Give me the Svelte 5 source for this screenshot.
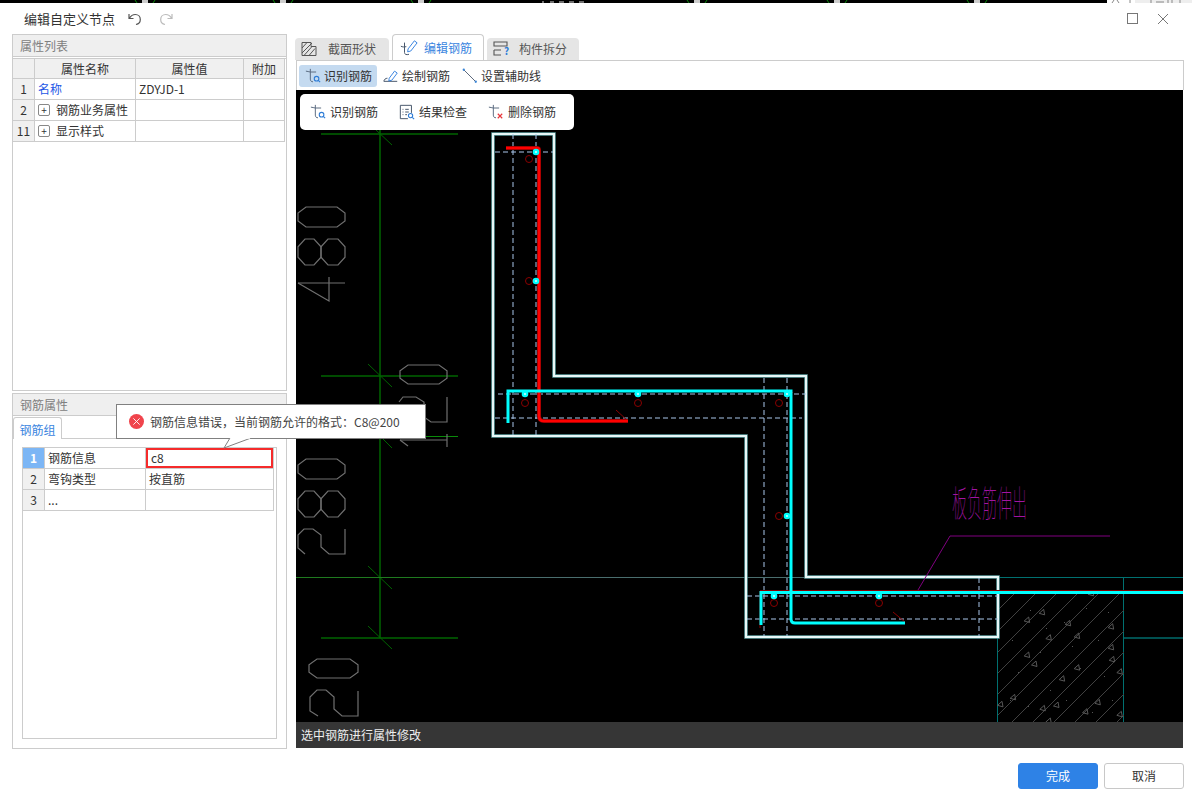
<script>
  const octo = (x1, y1, x2, y2, c = 8) =>
    `${x1 + c},${y1} ${x2 - c},${y1} ${x2},${y1 + (y2 - y1) * 0.3} ${x2},${y2 - (y2 - y1) * 0.3} ${x2 - c},${y2} ${x1 + c},${y2} ${x1},${y2 - (y2 - y1) * 0.3} ${x1},${y1 + (y2 - y1) * 0.3}`;
  const zeros = [
    [298, 207, 345, 227],
    [400, 365, 447, 384],
    [298, 459, 345, 479],
    [309, 659, 358, 678]
  ];
  const rounds = [
    [298, 239, 321, 265],
    [321, 239, 345, 265],
    [298, 491, 321, 517],
    [321, 491, 345, 517]
  ];
  const grayLines = [
    '298,283 345,283',
    '298,283 329,301 329,277',
    '399,402 403,397 416,397 424,402 424,417 431,422 447,422 447,397',
    '447,434 447,447',
    '400,440 447,440',
    '400,440 408,446',
    '305,554 298,548 298,535 304,529 313,529 321,535 321,547 329,554 345,554 345,529',
    '318,716 310,711 310,697 317,690 326,690 334,697 334,709 342,716 358,716 358,691'
  ];
  const ticks = [
    [376, 130, 392, 145],
    [368, 364, 392, 387],
    [368, 424, 392, 448],
    [368, 566, 392, 589],
    [368, 626, 392, 649]
  ];
  const hatch = Array.from({ length: 13 }, (_, i) => 1016 + i * 21);
  const rocks = [
    [302, 100], [155, 157], [110, 180], [233, 190], [362, 200], [175, 233], [260, 228],
    [362, 262], [110, 285], [132, 312], [365, 298], [260, 323], [388, 335], [215, 356],
    [68, 412], [30, 433], [198, 435], [157, 445], [322, 427], [285, 455], [388, 463], [175, 483]
  ].map(([x, y]) => [990 + x / 3, 560 + y / 3]);
  const specks = [
    [1030, 610], [1046, 628], [1086, 608], [1108, 612], [1012, 640], [1040, 652], [1064, 622],
    [1098, 640], [1018, 672], [1050, 690], [1080, 668], [1104, 676], [1028, 706], [1066, 700],
    [1092, 712], [1010, 700], [1072, 646], [1112, 700]
  ];
  const reds = [[529, 159], [529, 281], [525, 403], [638, 403], [779, 403], [779, 516], [774, 603], [879, 603]];
  const nodes = [[536, 152], [536, 281], [525, 394], [638, 394], [787, 394], [787, 516], [774, 596], [879, 596]];
  const outline = '493,134 554,134 554,376 806,376 806,577 998,577 998,637 746,637 746,436 493,436';
  const dashes = [
    'M513 134V436', 'M536 134V436', 'M495 152H553', 'M498 394H806', 'M495 418H802',
    'M764 378V636', 'M787 378V636', 'M979 578V636', 'M747 596H998', 'M747 619H998'
  ];
  const arcs = [135, 273, 411, 687, 827, 967];

  const props1 = [
    { n: '1', name: '名称', value: 'ZDYJD-1', link: true },
    { n: '2', name: '钢筋业务属性', value: '', plus: true },
    { n: '11', name: '显示样式', value: '', plus: true }
  ];
  const props2 = [
    { n: '1', name: '钢筋信息', value: 'c8', on: true },
    { n: '2', name: '弯钩类型', value: '按直筋' },
    { n: '3', name: '...', value: '' }
  ];
</script>

{#snippet rebarIcon(color, mark)}
  <svg class="ic" viewBox="0 0 18 18" fill="none">
    <path d="M1 3.500c2 0 3 1 5 1M6 1v11.500c0 2 1 3 3 3M6 4.500h6.500" stroke="#5a6a80" stroke-width="1.100"/>
    {#if mark === 'x'}
      <path d="M11 11l5 5M16 11l-5 5" stroke="#e8373c" stroke-width="1.300"/>
    {:else}
      <circle cx="13" cy="12" r="2.600" stroke={color} stroke-width="1.200"/>
      <path d="M15 14l2 2" stroke={color} stroke-width="1.200"/>
    {/if}
  </svg>
{/snippet}

<div class="page">
  <svg class="topstrip" viewBox="0 0 1192 3" fill="none">
    <rect width="1107" height="3" fill="#000"/>
    {#each arcs as x}
      <path d="M{x} 0l2 3M{x + 20} 0l-2 3" stroke="#0a8a0a"/>
      <rect x={x + 7} y="0" width="6" height="3" fill="#ccc"/>
    {/each}
    <path d="M543 1v2M550 2h4M559 2h5M569 2h5M579 2h5" stroke="#ddd"/>
    <path d="M1112 3l2-3M1117 0l2 3M1130 0v3" stroke="#888"/>
    <rect x="1135" y="0" width="57" height="3" fill="#eee"/>
    <path d="M1151 0v3M1156 2h8M1168 0v3M1172 0v3M1180 0v3" stroke="#888"/>
  </svg>

  <header class="head">
    <span class="title">编辑自定义节点</span>
    <svg class="hi" viewBox="0 0 16 16" fill="none"><path d="M2 3v4.500h4.500M2.400 7.200C4 4.600 6 3.500 8.300 3.500c3 0 5 2.300 5 5s-1.800 4.500-4.300 5" stroke="#555" stroke-width="1.200"/></svg>
    <svg class="hi" viewBox="0 0 16 16" fill="none"><path d="M14 3v4.500H9.500M13.600 7.200C12 4.600 10 3.500 7.700 3.500c-3 0-5 2.300-5 5s1.800 4.500 4.300 5" stroke="#bbb" stroke-width="1.200"/></svg>
    <span class="spacer"></span>
    <span class="winmax"></span>
    <svg class="winclose" viewBox="0 0 12 12" fill="none"><path d="M1 1l10 10M11 1L1 11" stroke="#777" stroke-width="1"/></svg>
  </header>

  <main class="body">
    <aside class="side">
      <section class="panel top">
        <h2>属性列表</h2>
        <div class="grid g1">
          <div class="c hd"></div><div class="c hd">属性名称</div><div class="c hd">属性值</div><div class="c hd">附加</div>
          {#each props1 as r}
            <div class="c hd">{r.n}</div>
            <div class="c left" class:link={r.link}>
              {#if r.plus}<span class="plus">+</span>{/if}{r.name}
            </div>
            <div class="c left">{r.value}</div>
            <div class="c"></div>
          {/each}
        </div>
      </section>

      <section class="panel bottom">
        <h2>钢筋属性</h2>
        <div class="subtabs"><span class="subtab">钢筋组</span></div>
        <div class="gridbox">
          <div class="grid g2">
            {#each props2 as r}
              <div class="c hd" class:sel={r.on}>{r.n}</div>
              <div class="c left">{r.name}</div>
              <div class="c left" class:err={r.on}>{r.value}</div>
            {/each}
          </div>
        </div>
      </section>

      <div class="tip">
        <span class="erricon"><svg viewBox="0 0 10 10" fill="none"><path d="M1.500 1.500l7 7M8.500 1.500l-7 7" stroke="#fff" stroke-width="1"/></svg></span>
        钢筋信息错误，当前钢筋允许的格式：C8@200
        <svg class="tail" viewBox="0 0 30 12" fill="none"><path d="M7 0L1 10L28 0" fill="#fff"/><path d="M7 0L1 10L28 0" stroke="#808080"/><path d="M7.500 0H27" stroke="#fff" stroke-width="1.500"/></svg>
      </div>
    </aside>

    <section class="right">
      <nav class="tabs">
        <button class="tab t1">
          <svg class="tabic" viewBox="0 0 16 16" fill="none"><path d="M1 1.500h9v4h5v9H1z" stroke="#555"/><path d="M1 7l5-5.500M1 12L11 2M3 14.500l8-9M8 14.500l6-7" stroke="#555"/></svg>
          截面形状
        </button>
        <button class="tab t2 active">
          <svg class="tabic big" viewBox="0 0 20 20" fill="none"><path d="M1 8c2 1 3 1 6 .500M5 4v11c0 2 2 3 5 2" stroke="#47566b" stroke-width="1.100"/><path d="M9 11l7-9 3 2.300-7 9-3.500 1z" stroke="#3a85e0" stroke-width="1.100"/></svg>
          编辑钢筋
        </button>
        <button class="tab t3">
          <svg class="tabic big" viewBox="0 0 18 18" fill="none"><path d="M1 2h13v4H1zM1 10h7M1 10v5h7" stroke="#555" stroke-width="1.100"/></svg><span class="q">?</span>
          构件拆分
        </button>
      </nav>

      <div class="toolbar">
        <span class="tool on">{@render rebarIcon('#2e7cd6')}识别钢筋</span>
        <span class="tool">
          <svg class="ic" viewBox="0 0 18 18" fill="none"><path d="M1 15c0-2 2-3.500 4-3.500M1 15h15" stroke="#47566b" stroke-width="1.100"/><path d="M7 11.500l6-8 3 2.200-6 8-3.500.8z" stroke="#3a85e0" stroke-width="1.100"/></svg>绘制钢筋
        </span>
        <span class="tool third">
          <svg class="ic" viewBox="0 0 18 18" fill="none"><path d="M2 2l13.500 13.500" stroke="#47566b"/><circle cx="2" cy="2" r="1.300" fill="#3a85d6"/><circle cx="15.500" cy="15.500" r="1.300" fill="#3a85d6"/></svg>设置辅助线
        </span>
      </div>

      <div class="canvas">
        <svg class="cad" viewBox="296 90 887 632" fill="none">
          <g stroke="#006400">
            <path d="M380 130V638" stroke-width="1.500"/>
            <path d="M321 134H458M321 376H458M321 638H458" stroke-width="1.500"/>
            {#each ticks as t}<line x1={t[0]} y1={t[1]} x2={t[2]} y2={t[3]}/>{/each}
          </g>
          <path d="M425 436.500H458" stroke="#0a8a0a"/>
          <path d="M296 577.500H470" stroke="#1f7a1f"/>
          <path d="M470 577.500H1183" stroke="#4a6e6e"/>

          <g stroke="#707070" stroke-width="1.200">
            {#each zeros as z}<polygon points={octo(z[0], z[1], z[2], z[3])}/>{/each}
            {#each rounds as z}<polygon points={octo(z[0], z[1], z[2], z[3], 7)}/>{/each}
            {#each grayLines as l}<polyline points={l}/>{/each}
          </g>

          <g stroke="#007070">
            <path d="M997.500 577V722M1123.500 577V722M998 577.500H1183"/>
            <path d="M1124 638H1183" stroke="#005050" stroke-width="2"/>
          </g>
          <svg x="998" y="592" width="126" height="130" viewBox="998 592 126 130">
            <g stroke="#414141">
              {#each hatch as x}<line x1={x} y1="592" x2={x - 140} y2="732"/>{/each}
            </g>
          </svg>
          <g stroke="#585858">
            {#each rocks as r}
              <polygon points="{r[0] - 2.500},{r[1] + 1} {r[0] + 2},{r[1] - 3} {r[0] + 3},{r[1] + 2.500}"/>
            {/each}
          </g>
          {#each specks as s}<rect x={s[0]} y={s[1]} width="1" height="1" fill="#555"/>{/each}

          <polygon points={outline} stroke="#5f9ea0" stroke-width="3.500"/>
          <polygon points={outline} stroke="#e8f8f8" stroke-width="2"/>

          <g stroke="#a9c6ea" stroke-dasharray="5 3">
            {#each dashes as d}<path d={d}/>{/each}
          </g>

          <path d="M918 590L950 536H1110" stroke="#800080"/>
          <text class="cadtext" transform="translate(952 517) scale(1 2.450)">板负筋伸出</text>

          <g stroke="#8a0000">
            <path d="M616 410L628 421M893 612L905 622M760 590.500H1183M760 591V628M789 389.500L793 393"/>
            {#each reds as c}<circle cx={c[0]} cy={c[1]} r="3.500"/>{/each}
          </g>

          <path d="M506 148H537Q539 148 539 150V416Q539 421 544 421H628" stroke="#8a0000" stroke-width="4"/>
          <path d="M506 148H537Q539 148 539 150V416Q539 421 544 421H628" stroke="#f00" stroke-width="2.600"/>
          <path d="M508 423V391H791V619Q791 623 795 623H905" stroke="#0ff" stroke-width="3"/>
          <path d="M761 625V592.500H1183" stroke="#0ff" stroke-width="3"/>
          {#each nodes as n}<circle cx={n[0]} cy={n[1]} r="3.300" fill="#0ff"/><circle cx={n[0]} cy={n[1]} r="1" fill="#d8ffff"/>{/each}
        </svg>

        <div class="float">
          <span class="ftool">{@render rebarIcon('#2e7cd6')}识别钢筋</span>
          <span class="ftool">
            <svg class="ic" viewBox="0 0 18 18" fill="none"><path d="M14 10V1.500H1.500v15H10M4 6h1M7 6h4M4 9h1M7 9h4M4 12h1M7 12h2" stroke="#47566b" stroke-width="1.100"/><circle cx="13" cy="13" r="2.400" stroke="#2e7cd6" stroke-width="1.200"/><path d="M15 15l2 2" stroke="#2e7cd6" stroke-width="1.200"/></svg>结果检查
          </span>
          <span class="ftool">{@render rebarIcon('#e8373c', 'x')}删除钢筋</span>
        </div>
      </div>

      <div class="status">选中钢筋进行属性修改</div>
    </section>
  </main>

  <footer class="foot">
    <button class="btn primary">完成</button>
    <button class="btn">取消</button>
  </footer>
</div>

<style>
  :global(body) { margin: 0; background: #fff; }
  .page {
    width: 1192px; height: 791px; overflow: hidden; position: relative;
    font: 12px/1 "Noto Sans CJK SC", "Liberation Sans", sans-serif; color: #333;
    background: #fff; display: flex; flex-direction: column;
  }
  .topstrip { width: 1192px; height: 3px; flex: none; display: block; }

  .head { height: 31px; flex: none; display: flex; align-items: center; padding: 0 23px 0 24px; box-sizing: border-box; }
  .title { font-size: 13px; color: #333; margin-right: 12px; }
  .hi { width: 16px; height: 16px; margin-right: 15px; }
  .spacer { flex: 1; }
  .winmax { width: 9px; height: 9px; border: 1px solid #777; margin-right: 19px; }
  .winclose { width: 12px; height: 12px; }

  .body { height: 715px; flex: none; display: flex; padding-left: 12px; gap: 9px; }
  .side { width: 275px; flex: none; display: flex; flex-direction: column; gap: 2px; position: relative; z-index: 2; }
  .panel { border: 1px solid #ccc; box-sizing: border-box; background: #fff; }
  .panel h2 {
    margin: 0; height: 21px; background: #efefef; border-bottom: 1px solid #ccc;
    font-size: 12px; font-weight: 400; color: #808080; line-height: 21px; padding-left: 7px;
  }
  .top { height: 357px; }
  .bottom { flex: 1; position: relative; }

  .grid { display: grid; background: #fff; }
  .g1 { grid-template-columns: 22px 101px 108px 41px; grid-template-rows: 20px; grid-auto-rows: 21px; border-top: 1px solid #ccc; margin-top: 1px; }
  .g2 { grid-template-columns: 22px 101px 128px; grid-auto-rows: 21px; }
  .c {
    border-right: 1px solid #ccc; border-bottom: 1px solid #ccc; box-sizing: border-box;
    display: flex; align-items: center; justify-content: center; font-size: 12px; color: #333; min-width: 0; white-space: nowrap;
  }
  .hd { background: #f0f0f0; }
  .left { justify-content: flex-start; padding-left: 3px; }
  .link { color: #2457e6; }
  .plus {
    width: 10px; height: 10px; border: 1px solid #888; border-radius: 2px; margin: 0 6px 0 0;
    display: inline-flex; align-items: center; justify-content: center; font-size: 10px; flex: none; box-sizing: content-box;
  }
  .subtabs { height: 21px; margin-top: 1px; border-bottom: 1px solid #ccc; display: flex; padding-left: 0; }
  .subtab {
    width: 49px; height: 22px; box-sizing: border-box; border: 1px solid #ccc; border-bottom: 0; border-radius: 3px 3px 0 0;
    background: #fff; color: #3a85e0; display: flex; align-items: center; justify-content: center; padding-top: 2px;
  }
  .gridbox { position: absolute; left: 9px; top: 53px; width: 255px; bottom: 9px; border: 1px solid #ccc; box-sizing: border-box; }
  .gridbox .g2 { border-top: 1px solid #ccc; margin: -1px 0 0 0; }
  .sel { background: #7cb6f5; color: #fff; font-weight: 700; }
  .err { box-shadow: inset 0 0 0 2px #f52b2b; padding-left: 5px; }

  .tip {
    position: absolute; left: 104px; top: 370px; width: 310px; height: 35px; box-sizing: border-box;
    border: 1px solid #808080; background: #fff; display: flex; align-items: center; padding-left: 12px; color: #444; white-space: nowrap;
  }
  .erricon {
    width: 15px; height: 15px; border-radius: 50%; background: #f0444c; display: inline-flex; align-items: center; justify-content: center; margin-right: 6px; flex: none;
  }
  .erricon svg { width: 9px; height: 9px; }
  .tail { position: absolute; left: 106px; top: 33px; width: 30px; height: 12px; }

  .right { width: 888px; flex: none; display: flex; flex-direction: column; }
  .tabs { height: 26px; flex: none; display: flex; }
  .tab {
    height: 22px; margin-top: 4px; border: 0; background: #e5e5e5; border-radius: 4px 4px 0 0; padding: 0 0 0 6px;
    display: flex; align-items: center; font: inherit; color: #555; white-space: nowrap; position: relative;
  }
  .t1 { width: 94px; margin-left: -1px; }
  .t2 { width: 92px; margin-left: 3px; padding-left: 7px; }
  .t3 { width: 92px; margin-left: 3px; }
  .active {
    height: 26px; margin-top: 0; background: #fff; border: 1px solid #ccc; border-bottom: 0; color: #3a85e0; box-sizing: border-box; z-index: 1;
  }
  .tabic { width: 16px; height: 16px; margin-right: 11px; flex: none; }
  .tabic.big { width: 18px; height: 18px; margin-right: 6px; }
  .t2 .tabic.big { margin-right: 6px; }
  .t3 .tabic.big { margin-right: 8px; }
  .q { position: absolute; left: 17px; top: 8px; color: #2e7cd6; font-size: 10px; font-weight: 700; }

  .toolbar {
    height: 30px; flex: none; border: 1px solid #ccc; border-bottom: 0; box-sizing: border-box;
    display: flex; align-items: center; padding: 1px 0 0 2px; background: #fff;
  }
  .tool { height: 22px; display: flex; align-items: center; gap: 3px; padding: 0 5px 0 6px; border-radius: 3px; white-space: nowrap; }
  .tool.on { background: #c4daf0; }
  .third { margin-left: 1px; }
  .ic { width: 16px; height: 16px; flex: none; }

  .canvas { height: 632px; flex: none; position: relative; background: #000; overflow: hidden; margin-right: 1px; }
  .cad { display: block; width: 887px; height: 632px; }
  .cadtext { font: 100 15px "Noto Sans CJK SC", sans-serif; fill: #a214a2; }
  .float {
    position: absolute; left: 4px; top: 4px; width: 274px; height: 36px; background: #fff; border-radius: 5px;
    display: flex; align-items: center; padding-left: 10px; box-sizing: border-box;
  }
  .ftool { display: flex; align-items: center; gap: 4px; white-space: nowrap; margin-right: 21px; }

  .status {
    height: 26px; flex: none; margin-right: 1px; background: #363636; color: #eee;
    display: flex; align-items: center; padding-left: 5px;
  }

  .foot { flex: 1; display: flex; justify-content: flex-end; padding: 14px 8px 0 0; gap: 6px; }
  .btn {
    width: 80px; height: 26px; border: 1px solid #c8c8c8; border-radius: 3px; background: #fff;
    font: inherit; color: #333; padding: 0; box-sizing: border-box;
  }
  .primary { background: #2e82e6; border-color: #2e82e6; color: #fff; }
</style>
